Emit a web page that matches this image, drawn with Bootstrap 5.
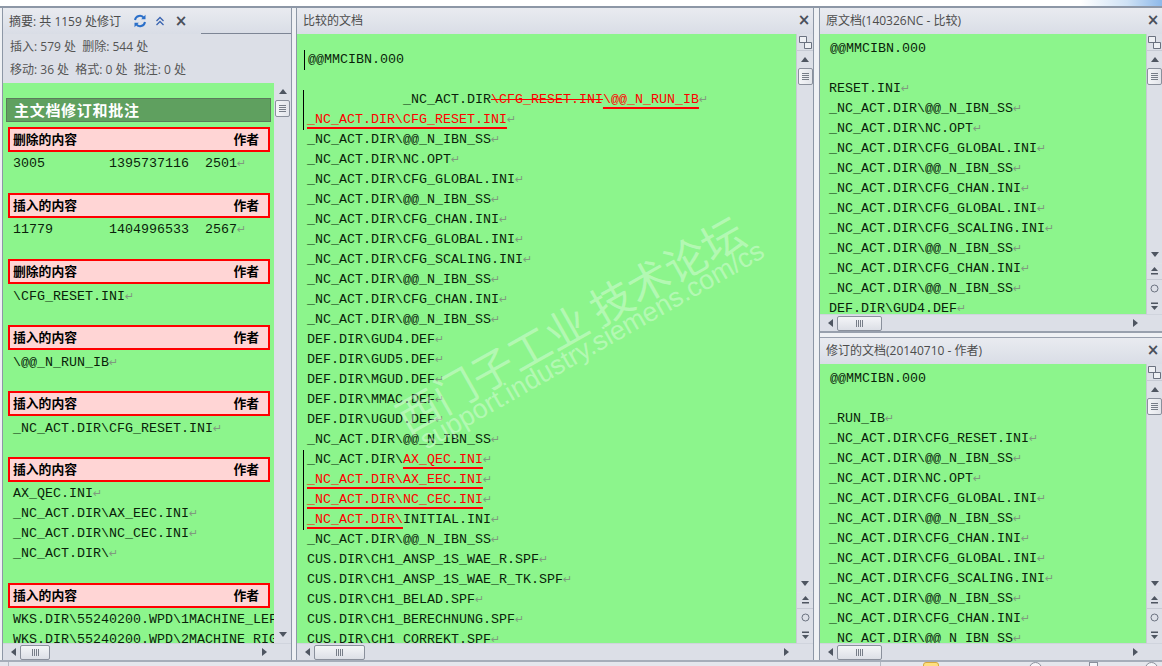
<!DOCTYPE html>
<html lang="zh">
<head>
<meta charset="utf-8">
<title>比较的文档</title>
<link rel="stylesheet" href="https://cdn.jsdelivr.net/npm/bootstrap@5.3.0/dist/css/bootstrap.min.css">
<style>
html,body{height:100%;overflow:hidden;background:#e6e8ee}
body{font-family:"Open Sans","Noto Sans CJK SC",sans-serif;font-size:12px;color:#4c4c4c}
.app{height:666px;width:1162px}
.topstrip{height:6px;background:linear-gradient(90deg,#fff 0,#fff 93%,#cfe2f5 97%,#8db9ea 100%);flex:none}
.panes{height:654px;border-top:2px solid #8d97a6;background:#eff1f4;flex:none}
.botstrip{height:6px;flex:none;background:#e4e6ec;border-top:2px solid #a6adb9;overflow:hidden}
.stdiv{width:1px;height:6px;background:#b4b9c3;flex:none}
.styellow{width:16px;height:8px;background:#ffdf80;border:1px solid #d8a93c;border-radius:3px;flex:none}
.stcircle{width:13px;height:13px;border:1px solid #8a909c;border-radius:50%;background:#f4f5f8;flex:none}
.stsquare{width:9px;height:8px;border:1px solid #8a909c;background:#f4f5f8;flex:none}
.ms-st1{margin-left:8px}.ms-st2{margin-left:871px}.ms-st3{margin-left:42px}.ms-st4{margin-left:90px}.ms-st5{margin-left:47px}.ms-st6{margin-left:47px}
.leftpane{width:290px;margin-left:2px;border-left:1px solid #8d97a6;border-right:1px solid #8d97a6;flex:none}
.midpane{width:518px;margin-left:4px;border-left:1px solid #8d97a6;border-right:1px solid #8d97a6;flex:none}
.rightcol{width:343px;margin-left:5px;border-left:1px solid #8d97a6;flex:none}
.upperpane{height:325px;border-bottom:2px solid #98a0ad}
.lowerpane{height:323px;margin-top:4px;border-top:1px solid #98a0ad}
.titlebar{height:26px;flex:none;background:linear-gradient(#e9ebf0,#d9dde6);font-size:12px;line-height:25px;padding-left:6px;white-space:nowrap}
.titlebar .closex{width:16px;text-align:center;margin-right:1px}
.tabrule{align-self:flex-end;height:1px;background:#7d8595;flex:1 1 auto;margin-left:3px}
.closex{color:#4a4f5a;font:700 15px/24px "DejaVu Sans",sans-serif}
.summary{height:49px;flex:none;background:#dcdfe7;padding:1px 0 0 7px;line-height:23px;font-size:12px;color:#555}
.docwrap{background:#8cf58c;font:13.333px/20px "Liberation Mono",monospace;color:#0a1f0a;overflow:hidden;position:relative}
.docwrap div{white-space:pre}
.docwrap span.nl{color:#7f9a7f;font:11px/20px "DejaVu Sans",sans-serif}
.firstline{padding-top:5px;margin-left:1px}
.vbar{width:17px;flex:none;background:#dcdfe7;position:relative}
.rightcol .vbar{width:16px}
.vbar.edge{border-left:1px solid #c6cad4}
.hbar{height:17px;flex:none;background:#dcdfe7;border-top:1px solid #d0d4dd}
.corner{width:16px;flex:none;background:#dcdfe7}
.tri-u,.tri-d,.tri-l,.tri-r{width:0;height:0;display:block;flex:none}
.tri-u{border:4px solid transparent;border-bottom:5px solid #4e5561;border-top:0}
.tri-d{border:4px solid transparent;border-top:5px solid #4e5561;border-bottom:0}
.tri-l{border:4px solid transparent;border-right:5px solid #4e5561;border-left:0}
.tri-r{border:4px solid transparent;border-left:5px solid #4e5561;border-right:0}
.vthumb{height:17px;width:15px;flex:none;background:linear-gradient(90deg,#f4f5f8,#e2e4ea);border:1px solid #8a909c;border-radius:2px;display:flex;flex-direction:column;gap:1px;justify-content:center;align-items:center}
.vthumb i{display:block;width:7px;height:1px;background:#777d88}
.hthumb{height:15px;width:45px;flex:none;background:linear-gradient(#f4f5f8,#dcdfe6);border:1px solid #8a909c;border-radius:2px;display:flex;gap:1px;justify-content:center;align-items:center}
.hthumb i{display:block;height:7px;width:1px;background:#777d88}
.hthumb.narrow{width:30px}
.hthumb.wide{width:51px}
.navbtn{height:17px;display:flex;align-items:center;justify-content:center;flex:none}
.rulerbtn{height:17px;flex:none;border-bottom:1px solid #c6cad4;display:flex;align-items:center;justify-content:center}
.vspace{flex:1 1 auto}
.maintitle{height:24px;margin:15px 3px 5px 3px;background:#5fa05f;border:1px solid #5b7a5b;color:#fff;font:700 15px/21px "Noto Sans CJK SC",sans-serif;letter-spacing:.7px;padding-left:7px}
.revhead{height:25px;margin:0 4px 0 5px;border:2px solid #f00;background:#ffd5d5;color:#000;font:700 12.8px/19px "Noto Sans CJK SC",sans-serif;display:flex;justify-content:space-between;padding:0 9px 0 3px}
.revbody{height:41px;padding:3px 0 0 10px}
.revbody.tight{padding-top:2px}
.revbody.long{height:101px;padding-top:2px}
.lines{padding-left:10px}
.rightcol .lines{padding-left:9px}
.changebar{position:relative}
.changebar::before{content:"";position:absolute;left:-4px;top:0;bottom:0;width:1px;background:#000}
.firstbar{margin-top:16px;margin-left:1px}
.blankline{height:20px}
.ins{color:#f00;text-decoration:underline;text-decoration-color:#f00;text-decoration-thickness:2px;text-underline-offset:4px}
.del{color:#f00;text-decoration:line-through}
.watermark{position:absolute;pointer-events:none;transform-origin:0 50%;white-space:nowrap;color:rgba(255,255,255,.36)}
.wm1{left:102px;top:364px;font:400 42.5px/44px "Noto Sans CJK SC",sans-serif;transform:rotate(-29.5deg)}
.wm2{left:125px;top:392px;font:400 27px/32px "Liberation Sans",sans-serif;transform:rotate(-29.7deg)}
</style>
</head>
<body>
<div class="app d-flex flex-column">
<div class="topstrip"></div>
<div class="panes d-flex">

<div class="leftpane d-flex flex-column">
  <div class="titlebar d-flex align-items-center gap-2">
    <span class="me-1">摘要: 共 1159 处修订</span>
    <svg width="14" height="14" viewBox="0 0 14 14" fill="none" stroke="#2a6fc9" stroke-width="2"><path d="M2 6a5 5 0 0 1 9-2"/><path d="M12 8a5 5 0 0 1-9 2"/><path d="M12.500 .8v4.400H8.200z" fill="#2a6fc9" stroke="none"/><path d="M1.500 13.200V8.800h4.300z" fill="#2a6fc9" stroke="none"/></svg>
    <svg width="10" height="10" viewBox="0 0 10 10" fill="none" stroke="#3a64b0" stroke-width="1.300"><path d="M1.500 5 5 1.500 8.500 5M1.500 9 5 5.500 8.500 9"/></svg>
    <span class="closex">×</span>
    <span class="tabrule"></span>
  </div>
  <div class="summary"><div>插入: 579 处&nbsp; 删除: 544 处</div><div>移动: 36 处&nbsp; 格式: 0 处&nbsp; 批注: 0 处</div></div>
  <div class="d-flex flex-grow-1 overflow-hidden">
    <div class="docwrap flex-grow-1">
      <div class="maintitle">主文档修订和批注</div>
      <div class="revhead"><span>删除的内容</span><span>作者</span></div>
      <div class="revbody tight">3005        1395737116  2501<span class="nl">↵</span></div>
      <div class="revhead"><span>插入的内容</span><span>作者</span></div>
      <div class="revbody tight">11779       1404996533  2567<span class="nl">↵</span></div>
      <div class="revhead"><span>删除的内容</span><span>作者</span></div>
      <div class="revbody">\CFG_RESET.INI<span class="nl">↵</span></div>
      <div class="revhead"><span>插入的内容</span><span>作者</span></div>
      <div class="revbody">\@@_N_RUN_IB<span class="nl">↵</span></div>
      <div class="revhead"><span>插入的内容</span><span>作者</span></div>
      <div class="revbody">_NC_ACT.DIR\CFG_RESET.INI<span class="nl">↵</span></div>
      <div class="revhead"><span>插入的内容</span><span>作者</span></div>
      <div class="revbody long">AX_QEC.INI<span class="nl">↵</span>
_NC_ACT.DIR\AX_EEC.INI<span class="nl">↵</span>
_NC_ACT.DIR\NC_CEC.INI<span class="nl">↵</span>
_NC_ACT.DIR\<span class="nl">↵</span></div>
      <div class="revhead"><span>插入的内容</span><span>作者</span></div>
      <div class="revbody long">WKS.DIR\55240200.WPD\1MACHINE_LEFT.WPD
WKS.DIR\55240200.WPD\2MACHINE_RIGHT.WPD</div>
    </div>
    <div class="vbar d-flex flex-column align-items-center">
      <div class="navbtn"><span class="tri-u"></span></div>
      <div class="vthumb"><i></i><i></i><i></i><i></i></div>
      <div class="vspace"></div>
      <div class="navbtn"><span class="tri-d"></span></div>
    </div>
  </div>
  <div class="hbar d-flex align-items-center">
    <span class="tri-l ms-2 me-1"></span><span class="hthumb narrow"><i></i><i></i><i></i><i></i></span>
    <span class="vspace"></span><span class="tri-r me-2"></span><span class="corner"></span>
  </div>
</div>

<div class="midpane d-flex flex-column">
  <div class="titlebar d-flex justify-content-between"><span>比较的文档</span><span class="closex">×</span></div>
  <div class="d-flex flex-grow-1 overflow-hidden">
    <div class="docwrap flex-grow-1 lines">
<div class="changebar firstbar">@@MMCIBN.000</div>
<div class="blankline"></div>
<div class="changebar"><div>            _NC_ACT.DIR<span class="del">\CFG_RESET.INI</span><span class="ins">\@@_N_RUN_IB</span><span class="nl">↵</span></div><div><span class="ins">_NC_ACT.DIR\CFG_RESET.INI</span><span class="nl">↵</span></div></div>
<div>_NC_ACT.DIR\@@_N_IBN_SS<span class="nl">↵</span></div>
<div>_NC_ACT.DIR\NC.OPT<span class="nl">↵</span></div>
<div>_NC_ACT.DIR\CFG_GLOBAL.INI<span class="nl">↵</span></div>
<div>_NC_ACT.DIR\@@_N_IBN_SS<span class="nl">↵</span></div>
<div>_NC_ACT.DIR\CFG_CHAN.INI<span class="nl">↵</span></div>
<div>_NC_ACT.DIR\CFG_GLOBAL.INI<span class="nl">↵</span></div>
<div>_NC_ACT.DIR\CFG_SCALING.INI<span class="nl">↵</span></div>
<div>_NC_ACT.DIR\@@_N_IBN_SS<span class="nl">↵</span></div>
<div>_NC_ACT.DIR\CFG_CHAN.INI<span class="nl">↵</span></div>
<div>_NC_ACT.DIR\@@_N_IBN_SS<span class="nl">↵</span></div>
<div>DEF.DIR\GUD4.DEF<span class="nl">↵</span></div>
<div>DEF.DIR\GUD5.DEF<span class="nl">↵</span></div>
<div>DEF.DIR\MGUD.DEF<span class="nl">↵</span></div>
<div>DEF.DIR\MMAC.DEF<span class="nl">↵</span></div>
<div>DEF.DIR\UGUD.DEF<span class="nl">↵</span></div>
<div>_NC_ACT.DIR\@@_N_IBN_SS<span class="nl">↵</span></div>
<div class="changebar"><div>_NC_ACT.DIR\<span class="ins">AX_QEC.INI</span><span class="nl">↵</span></div><div><span class="ins">_NC_ACT.DIR\AX_EEC.INI</span><span class="nl">↵</span></div><div><span class="ins">_NC_ACT.DIR\NC_CEC.INI</span><span class="nl">↵</span></div><div><span class="ins">_NC_ACT.DIR\</span>INITIAL.INI<span class="nl">↵</span></div></div>
<div>_NC_ACT.DIR\@@_N_IBN_SS<span class="nl">↵</span></div>
<div>CUS.DIR\CH1_ANSP_1S_WAE_R.SPF<span class="nl">↵</span></div>
<div>CUS.DIR\CH1_ANSP_1S_WAE_R_TK.SPF<span class="nl">↵</span></div>
<div>CUS.DIR\CH1_BELAD.SPF<span class="nl">↵</span></div>
<div>CUS.DIR\CH1_BERECHNUNG.SPF<span class="nl">↵</span></div>
<div>CUS.DIR\CH1_CORREKT.SPF<span class="nl">↵</span></div>
      <div class="watermark wm1">西门子工业 技术论坛</div>
      <div class="watermark wm2">support.industry.siemens.com/cs</div>
    </div>
    <div class="vbar edge d-flex flex-column align-items-center">
      <div class="rulerbtn w-100"><svg width="13" height="13" viewBox="0 0 13 13" fill="#eef0f4" stroke="#6b7280"><path d="M.5.500h7v6h-7zM5.500 6.500h7v6h-7z"/></svg></div>
      <div class="navbtn"><span class="tri-u"></span></div>
      <div class="vthumb"><i></i><i></i><i></i><i></i></div>
      <div class="vspace"></div>
      <div class="navbtn"><span class="tri-d"></span></div>
      <div class="rulerbtn w-100 border-top"><svg width="9" height="9" viewBox="0 0 9 9" fill="#4e5561"><path d="M4.500 0 8 4H1zM1 6h7v1.500H1z"/></svg></div>
      <div class="navbtn"><svg width="9" height="9" viewBox="0 0 9 9" fill="none" stroke="#6b7280"><circle cx="4.500" cy="4.500" r="3.500"/></svg></div>
      <div class="navbtn"><svg width="9" height="9" viewBox="0 0 9 9" fill="#4e5561"><path d="M4.500 9 8 5H1zM1 1.500h7V3H1z"/></svg></div>
    </div>
  </div>
  <div class="hbar d-flex align-items-center">
    <span class="tri-l ms-2 me-1"></span><span class="hthumb wide"><i></i><i></i><i></i><i></i></span>
    <span class="vspace"></span><span class="tri-r me-2"></span><span class="corner"></span>
  </div>
</div>

<div class="rightcol d-flex flex-column">
  <div class="upperpane d-flex flex-column">
    <div class="titlebar d-flex justify-content-between"><span>原文档(140326NC - 比较)</span><span class="closex">×</span></div>
    <div class="d-flex flex-grow-1 overflow-hidden">
      <div class="docwrap flex-grow-1 lines">
<div class="firstline">@@MMCIBN.000</div>
<div class="blankline"></div>
<div>RESET.INI<span class="nl">↵</span></div>
<div>_NC_ACT.DIR\@@_N_IBN_SS<span class="nl">↵</span></div>
<div>_NC_ACT.DIR\NC.OPT<span class="nl">↵</span></div>
<div>_NC_ACT.DIR\CFG_GLOBAL.INI<span class="nl">↵</span></div>
<div>_NC_ACT.DIR\@@_N_IBN_SS<span class="nl">↵</span></div>
<div>_NC_ACT.DIR\CFG_CHAN.INI<span class="nl">↵</span></div>
<div>_NC_ACT.DIR\CFG_GLOBAL.INI<span class="nl">↵</span></div>
<div>_NC_ACT.DIR\CFG_SCALING.INI<span class="nl">↵</span></div>
<div>_NC_ACT.DIR\@@_N_IBN_SS<span class="nl">↵</span></div>
<div>_NC_ACT.DIR\CFG_CHAN.INI<span class="nl">↵</span></div>
<div>_NC_ACT.DIR\@@_N_IBN_SS<span class="nl">↵</span></div>
<div>DEF.DIR\GUD4.DEF<span class="nl">↵</span></div>
      </div>
      <div class="vbar edge d-flex flex-column align-items-center">
        <div class="rulerbtn w-100"><svg width="13" height="13" viewBox="0 0 13 13" fill="#eef0f4" stroke="#6b7280"><path d="M.5.500h7v6h-7zM5.500 6.500h7v6h-7z"/></svg></div>
        <div class="navbtn"><span class="tri-u"></span></div>
        <div class="vthumb"><i></i><i></i><i></i><i></i></div>
        <div class="vspace"></div>
        <div class="navbtn"><span class="tri-d"></span></div>
        <div class="rulerbtn w-100 border-top"><svg width="9" height="9" viewBox="0 0 9 9" fill="#4e5561"><path d="M4.500 0 8 4H1zM1 6h7v1.500H1z"/></svg></div>
        <div class="navbtn"><svg width="9" height="9" viewBox="0 0 9 9" fill="none" stroke="#6b7280"><circle cx="4.500" cy="4.500" r="3.500"/></svg></div>
        <div class="navbtn"><svg width="9" height="9" viewBox="0 0 9 9" fill="#4e5561"><path d="M4.500 9 8 5H1zM1 1.500h7V3H1z"/></svg></div>
      </div>
    </div>
    <div class="hbar d-flex align-items-center">
      <span class="tri-l ms-2 me-1"></span><span class="hthumb"><i></i><i></i><i></i><i></i></span>
      <span class="vspace"></span><span class="tri-r me-2"></span><span class="corner"></span>
    </div>
  </div>
  <div class="lowerpane d-flex flex-column">
    <div class="titlebar d-flex justify-content-between"><span>修订的文档(20140710 - 作者)</span><span class="closex">×</span></div>
    <div class="d-flex flex-grow-1 overflow-hidden">
      <div class="docwrap flex-grow-1 lines">
<div class="firstline">@@MMCIBN.000</div>
<div class="blankline"></div>
<div>_RUN_IB<span class="nl">↵</span></div>
<div>_NC_ACT.DIR\CFG_RESET.INI<span class="nl">↵</span></div>
<div>_NC_ACT.DIR\@@_N_IBN_SS<span class="nl">↵</span></div>
<div>_NC_ACT.DIR\NC.OPT<span class="nl">↵</span></div>
<div>_NC_ACT.DIR\CFG_GLOBAL.INI<span class="nl">↵</span></div>
<div>_NC_ACT.DIR\@@_N_IBN_SS<span class="nl">↵</span></div>
<div>_NC_ACT.DIR\CFG_CHAN.INI<span class="nl">↵</span></div>
<div>_NC_ACT.DIR\CFG_GLOBAL.INI<span class="nl">↵</span></div>
<div>_NC_ACT.DIR\CFG_SCALING.INI<span class="nl">↵</span></div>
<div>_NC_ACT.DIR\@@_N_IBN_SS<span class="nl">↵</span></div>
<div>_NC_ACT.DIR\CFG_CHAN.INI<span class="nl">↵</span></div>
<div>_NC_ACT.DIR\@@_N_IBN_SS<span class="nl">↵</span></div>
      </div>
      <div class="vbar edge d-flex flex-column align-items-center">
        <div class="rulerbtn w-100"><svg width="13" height="13" viewBox="0 0 13 13" fill="#eef0f4" stroke="#6b7280"><path d="M.5.500h7v6h-7zM5.500 6.500h7v6h-7z"/></svg></div>
        <div class="navbtn"><span class="tri-u"></span></div>
        <div class="vthumb"><i></i><i></i><i></i><i></i></div>
        <div class="vspace"></div>
        <div class="navbtn"><span class="tri-d"></span></div>
        <div class="rulerbtn w-100 border-top"><svg width="9" height="9" viewBox="0 0 9 9" fill="#4e5561"><path d="M4.500 0 8 4H1zM1 6h7v1.500H1z"/></svg></div>
        <div class="navbtn"><svg width="9" height="9" viewBox="0 0 9 9" fill="none" stroke="#6b7280"><circle cx="4.500" cy="4.500" r="3.500"/></svg></div>
        <div class="navbtn"><svg width="9" height="9" viewBox="0 0 9 9" fill="#4e5561"><path d="M4.500 9 8 5H1zM1 1.500h7V3H1z"/></svg></div>
      </div>
    </div>
    <div class="hbar d-flex align-items-center">
      <span class="tri-l ms-2 me-1"></span><span class="hthumb"><i></i><i></i><i></i><i></i></span>
      <span class="vspace"></span><span class="tri-r me-2"></span><span class="corner"></span>
    </div>
  </div>
</div>

</div>
<div class="botstrip d-flex align-items-start">
  <span class="stdiv ms-st1"></span><span class="stdiv ms-st2"></span><span class="styellow ms-st3"></span><span class="stcircle ms-st4"></span><span class="stsquare ms-st5"></span><span class="stcircle ms-st6"></span>
</div>
</div>
<script src="https://cdn.jsdelivr.net/npm/bootstrap@5.3.0/dist/js/bootstrap.bundle.min.js"></script>
</body>
</html>
